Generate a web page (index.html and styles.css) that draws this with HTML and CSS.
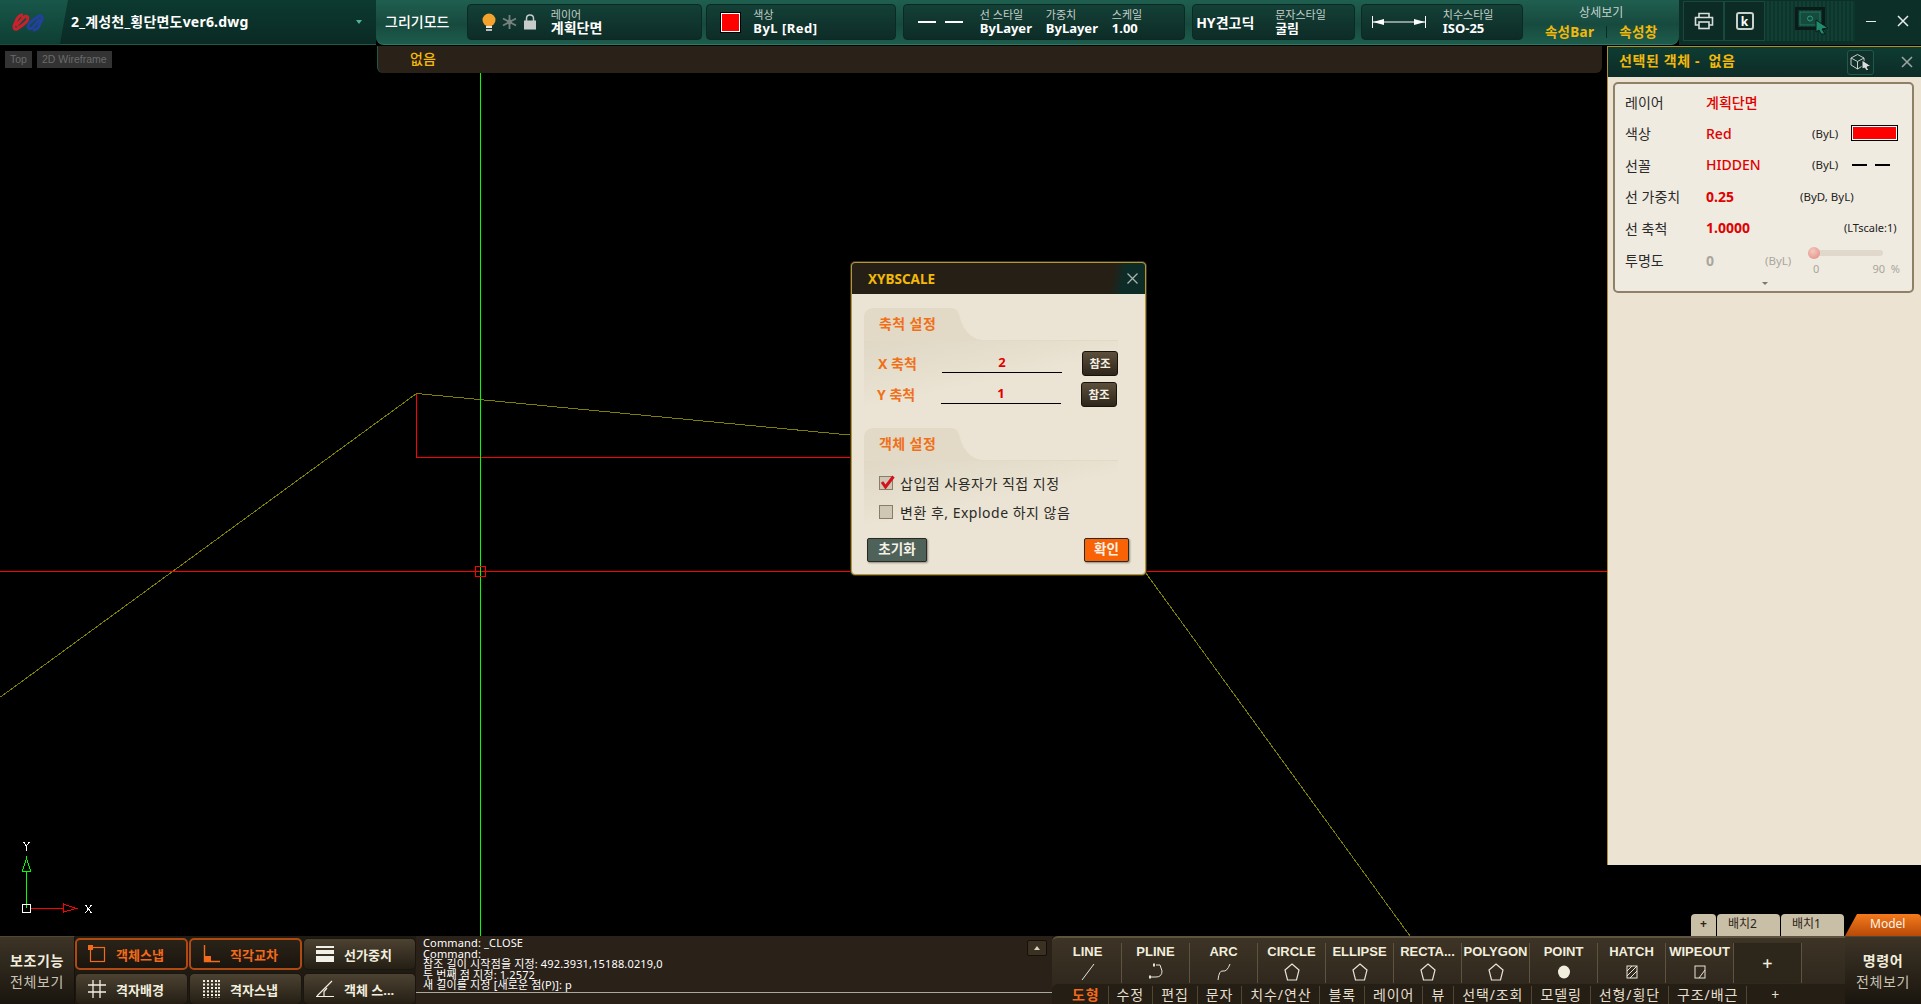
FILE: index.html
```html
<!DOCTYPE html>
<html lang="ko">
<head>
    <meta charset="UTF-8">
    <title>2_계성천_횡단면도ver6.dwg</title>
    <link rel="stylesheet" href="styles.css">
</head>
<body>
<div class="app">

    <header class="topbar">
        <div class="file-tab">
            <div class="logo">
                <svg width="32" height="19" viewBox="0 0 32 19" fill="none" stroke-width="3">
                    <path d="M4 13L11 5Q14 2 15.500 4Q17 7 12 11Q8 14 5 16Q1.500 17 2 13L5 6Q7 2 11 2" stroke="#c9222c"/>
                    <path d="M28 6L21 14Q18 17 16.500 15Q15 12 20 8Q24 5 27 3Q30.500 2 30 6L27 13Q25 17 21 17" stroke="#23419c"/>
                </svg>
            </div>
            <span class="file-name">2_계성천_횡단면도ver6.dwg</span>
            <span class="file-arrow"></span>
        </div>

        <div class="mode-bar">
            <div class="mode-name">그리기모드</div>

            <div class="group group-layer">
                <div class="layer-icons">
                    <svg width="14" height="19" viewBox="0 0 14 19">
                        <circle cx="7" cy="7" r="6.500" fill="#f2a32e"/>
                        <rect x="4" y="13" width="6" height="2" fill="#e8e8e8"/>
                        <rect x="4" y="16" width="6" height="2" fill="#bbb"/>
                    </svg>
                    <svg width="15" height="16" viewBox="0 0 15 16" stroke="#76827e" stroke-width="1.800">
                        <path d="M7.500 1V15M1 4.500L14 11.500M14 4.500L1 11.500"/>
                        <circle cx="7.500" cy="8" r="2.500" fill="#76827e" stroke="none"/>
                    </svg>
                    <svg width="14" height="16" viewBox="0 0 14 16">
                        <path d="M3.500 7V4.500C3.500 2.500 5 1 7 1S10.500 2.500 10.500 4.500V7" fill="none" stroke="#c7cccb" stroke-width="1.500"/>
                        <rect x="1" y="6.500" width="12" height="9" fill="#c7cccb"/>
                    </svg>
                </div>
                <div class="field">
                    <span class="field-label">레이어</span>
                    <span class="field-value field-value-big">계획단면</span>
                </div>
            </div>

            <div class="group group-color">
                <span class="color-chip"></span>
                <div class="field">
                    <span class="field-label">색상</span>
                    <span class="field-value field-value-wide">ByL [Red]</span>
                </div>
            </div>

            <div class="group group-line">
                <span class="dash-sample"><i></i><i></i></span>
                <div class="field field-style">
                    <span class="field-label">선 스타일</span>
                    <span class="field-value">ByLayer</span>
                </div>
                <div class="field field-style">
                    <span class="field-label">가중치</span>
                    <span class="field-value">ByLayer</span>
                </div>
                <div class="field">
                    <span class="field-label">스케일</span>
                    <span class="field-value">1.00</span>
                </div>
            </div>

            <div class="group group-text">
                <span class="font-name">HY견고딕</span>
                <div class="field">
                    <span class="field-label">문자스타일</span>
                    <span class="field-value">굴림</span>
                </div>
            </div>

            <div class="group group-dim">
                <svg class="dim-icon" width="54" height="16" viewBox="0 0 54 16" fill="#fff">
                    <rect x="0" y="2" width="1" height="12"/>
                    <rect x="53" y="2" width="1" height="12"/>
                    <rect x="1" y="7.500" width="52" height="1"/>
                    <path d="M1 8L12 5V11Z"/>
                    <path d="M53 8L42 5V11Z"/>
                </svg>
                <div class="field">
                    <span class="field-label">치수스타일</span>
                    <span class="field-value">ISO-25</span>
                </div>
            </div>

            <div class="detail">
                <div class="detail-title">상세보기</div>
                <div class="detail-links">
                    <span>속성Bar</span>
                    <i></i>
                    <span>속성창</span>
                </div>
            </div>
        </div>

        <div class="win-tools">
            <div class="tool-btn">
                <svg width="20" height="18" viewBox="0 0 20 18" fill="none" stroke="#d8dedb" stroke-width="1.600">
                    <path d="M5 5V1.500H15V5"/>
                    <path d="M5 13H1.500V5.500H18.500V13H15"/>
                    <rect x="5" y="10" width="10" height="6.500"/>
                </svg>
            </div>
            <div class="tool-btn">
                <span class="key-icon">k</span>
            </div>
            <div class="monitor-strip">
                <svg width="34" height="28" viewBox="0 0 34 28">
                    <rect x="1.500" y="1.500" width="27" height="20" fill="none" stroke="#0b1c18" stroke-width="3"/>
                    <rect x="5" y="5" width="20" height="13" fill="#154a3d" stroke="#1f7a63"/>
                    <circle cx="15" cy="11.500" r="2.500" fill="none" stroke="#2a9c7f"/>
                    <path d="M21 13L33 21L27 22L30 27L26 27L24 23L21 25Z" fill="#1f8a6d" stroke="#0b1c18"/>
                </svg>
            </div>
            <div class="win-btn"><span class="min-mark"></span></div>
            <div class="win-btn">
                <svg width="14" height="14" viewBox="0 0 14 14" stroke="#e8ecea" stroke-width="1.500"><path d="M2 2L12 12M12 2L2 12"/></svg>
            </div>
        </div>
    </header>

    <main class="viewport">
        <svg class="drawing" viewBox="0 46 1921 890" width="1921" height="890" shape-rendering="crispEdges">
            <path d="M0.500 697L416.500 393.500L860 436" stroke="#808000" fill="none"/>
            <path d="M1140 565L1410 936" stroke="#808000" fill="none"/>
            <path d="M416.500 393.500V457.500H860" stroke="#f00" fill="none"/>
            <path d="M0 571.500H1921" stroke="#f00"/>
            <path d="M480.500 73V936" stroke="#0f0"/>
            <rect x="475.500" y="566.500" width="10" height="10" fill="none" stroke="#f00"/>
            <path d="M26.500 871V908" stroke="#0f0"/>
            <path d="M26.500 858L22.500 871H30.500Z" fill="none" stroke="#0f0"/>
            <path d="M31 908.500H63" stroke="#f00"/>
            <path d="M63.500 904L76 908.500L63.500 912Z" fill="none" stroke="#f00"/>
            <rect x="22.500" y="904.500" width="8" height="8" fill="none" stroke="#fff"/>
            <path d="M23.500 842L26.500 846V851M29.500 842L26.500 846" fill="none" stroke="#fff"/>
            <path d="M85.500 905L91.500 913M91.500 905L85.500 913" fill="none" stroke="#fff"/>
        </svg>

        <div class="sub-row">
            <div class="view-labels">
                <span class="view-label">Top</span>
                <span class="view-label">2D Wireframe</span>
            </div>
            <div class="sub-bar">없음</div>
        </div>

        <aside class="prop-panel">
            <div class="prop-title">
                <span class="prop-title-text">선택된 객체 -  없음</span>
                <div class="cube-btn">
                    <svg width="22" height="18" viewBox="0 0 22 18" fill="none" stroke="#c7ceca">
                        <path d="M1 5L7.500 1.500L14 5V12L7.500 16L1 12ZM1 5L7.500 8.500L14 5M7.500 8.500V16"/>
                        <path d="M12 7L21 13L17 14L19 17.500L16.500 17.500L14.500 15L12 16Z" fill="#d8dedb" stroke="#10241f"/>
                    </svg>
                </div>
                <div class="prop-close">
                    <svg width="12" height="12" viewBox="0 0 12 12" stroke="#9aa5a1" stroke-width="1.600"><path d="M1 1L11 11M11 1L1 11"/></svg>
                </div>
            </div>
            <div class="prop-card">
                <div class="prop-row">
                    <span class="prop-name">레이어</span>
                    <span class="prop-val">계획단면</span>
                </div>
                <div class="prop-row">
                    <span class="prop-name">색상</span>
                    <span class="prop-val">Red</span>
                    <span class="prop-src">(ByL)</span>
                    <span class="prop-chip"></span>
                </div>
                <div class="prop-row">
                    <span class="prop-name">선꼴</span>
                    <span class="prop-val">HIDDEN</span>
                    <span class="prop-src">(ByL)</span>
                    <span class="prop-dash"><i></i><i></i></span>
                </div>
                <div class="prop-row">
                    <span class="prop-name">선 가중치</span>
                    <span class="prop-val prop-bold">0.25</span>
                    <span class="prop-src prop-src-wide">(ByD, ByL)</span>
                </div>
                <div class="prop-row">
                    <span class="prop-name">선 축척</span>
                    <span class="prop-val prop-bold">1.0000</span>
                    <span class="prop-src prop-src-end">(LTscale:1)</span>
                </div>
                <div class="prop-row prop-row-last">
                    <span class="prop-name">투명도</span>
                    <span class="prop-val prop-bold prop-off">0</span>
                    <span class="prop-src prop-off prop-src-alpha">(ByL)</span>
                    <div class="alpha">
                        <div class="alpha-track"><span class="alpha-knob"></span></div>
                        <div class="alpha-scale"><span>0</span><span>90 &nbsp;%</span></div>
                    </div>
                </div>
                <span class="more-arrow"></span>
            </div>
        </aside>

        <section class="dialog">
            <div class="dialog-title">
                <span>XYBSCALE</span>
                <div class="dialog-close">
                    <svg width="11" height="11" viewBox="0 0 11 11" stroke="#a9b3af" stroke-width="1.300"><path d="M0.500 0.500L10.500 10.500M10.500 0.500L0.500 10.500"/></svg>
                </div>
            </div>
            <div class="dialog-body">
                <div class="sec-tab">축척 설정</div>
                <div class="sec-body">
                    <div class="scale-row">
                        <span class="scale-name">X 축척</span>
                        <span class="scale-input">2</span>
                        <span class="ref-btn">참조</span>
                    </div>
                    <div class="scale-row scale-row-y">
                        <span class="scale-name">Y 축척</span>
                        <span class="scale-input">1</span>
                        <span class="ref-btn">참조</span>
                    </div>
                </div>
                <div class="sec-tab sec-tab-2">객체 설정</div>
                <div class="sec-body sec-body-2">
                    <label class="check-row">
                        <span class="check">
                            <svg width="15" height="14" viewBox="0 0 15 14"><path d="M2 7L5.500 12L13.500 1.500" fill="none" stroke="#d4111c" stroke-width="3"/></svg>
                        </span>
                        삽입점 사용자가 직접 지정
                    </label>
                    <label class="check-row">
                        <span class="check"></span>
                        변환 후, Explode 하지 않음
                    </label>
                </div>
                <div class="dialog-foot">
                    <span class="btn-reset">초기화</span>
                    <span class="btn-ok">확인</span>
                </div>
            </div>
        </section>

        <nav class="layout-tabs">
            <span class="layout-tab layout-add">+</span>
            <span class="layout-tab">배치2</span>
            <span class="layout-tab">배치1</span>
            <span class="layout-tab layout-model">Model</span>
        </nav>
    </main>

    <footer class="bottom">
        <div class="aux-btn">
            <strong>보조기능</strong>
            <span>전체보기</span>
        </div>
        <div class="snap-grid">
            <div class="snap snap-on">
                <svg width="18" height="18" viewBox="0 0 18 18"><rect x="2.500" y="2.500" width="14" height="14" fill="none" stroke="#f26a1b" stroke-width="1.200"/><rect x="0" y="0" width="5" height="5" fill="#f26a1b"/></svg>
                <span>객체스냅</span>
            </div>
            <div class="snap snap-on">
                <svg width="18" height="18" viewBox="0 0 18 18"><path d="M2.500 0V16.500H18" fill="none" stroke="#f26a1b" stroke-width="1.400"/><rect x="3" y="11" width="6" height="5" fill="#f26a1b"/></svg>
                <span>직각교차</span>
            </div>
            <div class="snap">
                <svg width="18" height="18" viewBox="0 0 18 18" fill="#f2efe6"><rect y="1" width="18" height="2"/><rect y="5" width="18" height="4"/><rect y="11" width="18" height="6"/></svg>
                <span>선가중치</span>
            </div>
            <div class="snap">
                <svg width="18" height="18" viewBox="0 0 18 18" stroke="#f2efe6" stroke-width="1.300"><path d="M5 0V18M12 0V18M0 5H18M0 12H18"/></svg>
                <span>격자배경</span>
            </div>
            <div class="snap">
                <svg width="18" height="18" viewBox="0 0 18 18" stroke="#f2efe6" stroke-width="2" stroke-dasharray="2 1.500"><path d="M2 0V18M6 0V18M10 0V18M14 0V18M17 0V18"/></svg>
                <span>격자스냅</span>
            </div>
            <div class="snap">
                <svg width="18" height="18" viewBox="0 0 18 18" fill="none" stroke="#f2efe6" stroke-width="1.200"><path d="M0 16.500H18M1 16L16 1"/><path d="M8 16.500V11.500L11 8" /></svg>
                <span>객체 스...</span>
            </div>
        </div>

        <div class="command">
            <div class="command-log">
                <div>Command: _CLOSE</div>
                <div>Command:</div>
                <div>참조 길이 시작점을 지정: 492.3931,15188.0219,0</div>
                <div>두 번째 점 지정: 1.2572</div>
                <div>새 길이를 지정 [새로운 점(P)]: p</div>
            </div>
            <div class="command-input"></div>
            <span class="command-up"></span>
        </div>

        <div class="ribbon">
            <div class="ribbon-tools">
                <div class="tool"><b>LINE</b><svg width="16" height="18" viewBox="0 0 16 18" fill="none" stroke="#e8e4d8"><path d="M2 17L14 1"/></svg></div>
                <div class="tool"><b>PLINE</b><svg width="16" height="18" viewBox="0 0 16 18" fill="none" stroke="#e8e4d8"><path d="M8 2H12L14 8Q14 14 8 14L2 14"/><path d="M6 0.500V3.500M2 12.500V15.500" stroke-width="2"/></svg></div>
                <div class="tool"><b>ARC</b><svg width="16" height="18" viewBox="0 0 16 18" fill="none" stroke="#e8e4d8"><path d="M2 17Q3 7 7 8T14 1"/></svg></div>
                <div class="tool"><b>CIRCLE</b><svg width="16" height="18" viewBox="0 0 16 18" fill="none" stroke="#e8e4d8" stroke-width="1.200"><path d="M8 1L15 7L12.500 17H3.500L1 7Z"/></svg></div>
                <div class="tool"><b>ELLIPSE</b><svg width="16" height="18" viewBox="0 0 16 18" fill="none" stroke="#e8e4d8" stroke-width="1.200"><path d="M8 1L15 7L12.500 17H3.500L1 7Z"/></svg></div>
                <div class="tool"><b>RECTA...</b><svg width="16" height="18" viewBox="0 0 16 18" fill="none" stroke="#e8e4d8" stroke-width="1.200"><path d="M8 1L15 7L12.500 17H3.500L1 7Z"/></svg></div>
                <div class="tool"><b>POLYGON</b><svg width="16" height="18" viewBox="0 0 16 18" fill="none" stroke="#e8e4d8" stroke-width="1.200"><path d="M8 1L15 7L12.500 17H3.500L1 7Z"/></svg></div>
                <div class="tool"><b>POINT</b><svg width="16" height="18" viewBox="0 0 16 18"><ellipse cx="8" cy="9" rx="6" ry="6.500" fill="#f2eedd"/></svg></div>
                <div class="tool"><b>HATCH</b><svg width="16" height="18" viewBox="0 0 16 18" fill="none" stroke="#e8e4d8"><rect x="3" y="3" width="10" height="12"/><path d="M3 8L8 3M3 13L13 3M6 15L13 8"/></svg></div>
                <div class="tool"><b>WIPEOUT</b><svg width="16" height="18" viewBox="0 0 16 18" fill="none" stroke="#e8e4d8"><rect x="3" y="3" width="10" height="12"/><path d="M7 15L13 7"/></svg></div>
                <div class="tool tool-add">+</div>
            </div>
            <div class="ribbon-tabs">
                <span class="rtab rtab-on">도형</span>
                <span class="rtab">수정</span>
                <span class="rtab">편집</span>
                <span class="rtab">문자</span>
                <span class="rtab">치수/연산</span>
                <span class="rtab">블록</span>
                <span class="rtab">레이어</span>
                <span class="rtab">뷰</span>
                <span class="rtab">선택/조회</span>
                <span class="rtab">모델링</span>
                <span class="rtab">선형/횡단</span>
                <span class="rtab">구조/배근</span>
                <span class="rtab rtab-add">+</span>
            </div>
        </div>

        <div class="all-cmd">
            <strong>명령어</strong>
            <span>전체보기</span>
        </div>
    </footer>
</div>
</body>
</html>
```

FILE: styles.css
```css
* {
    margin: 0;
    padding: 0;
    box-sizing: border-box;
}

body {
    font-family: "Noto Sans", "Noto Sans CJK KR", sans-serif;
    background: #000;
    overflow: hidden;
}

.app {
    width: 1921px;
    height: 1004px;
    display: flex;
    flex-direction: column;
    overflow: hidden;
}

/* top bar */
.topbar {
    height: 46px;
    display: flex;
    flex-shrink: 0;
    color: #fff;
}

.file-tab {
    width: 376px;
    height: 45px;
    display: flex;
    align-items: center;
    background: linear-gradient(#0c3a30, #0a2a24);
    border-bottom: 1px solid #1d5a4a;
}

.logo {
    width: 68px;
    height: 45px;
    display: flex;
    align-items: center;
    padding-left: 12px;
    background: linear-gradient(#18574a, #0e3e33);
    clip-path: polygon(0 0, 100% 0, 88% 100%, 0 100%);
}

.file-name {
    margin: -2px 0 0 3px;
    font-size: 14px;
    font-weight: 700;
    letter-spacing: 0.2px;
}

.file-arrow {
    margin-left: auto;
    margin-right: 14px;
    border-left: 3px solid transparent;
    border-right: 3px solid transparent;
    border-top: 4px solid #4fb598;
}

.mode-bar {
    width: 1303px;
    height: 45px;
    display: flex;
    align-items: center;
    gap: 4px;
    padding-left: 9px;
    background: linear-gradient(#1f5f4f, #174a3e 55%, #1d5c4c);
    border-bottom: 1px solid #2a7a64;
    border-radius: 0 0 8px 8px;
}

.mode-name {
    width: 78px;
    margin-top: -2px;
    font-size: 14px;
    font-weight: 500;
    white-space: nowrap;
}

.group {
    height: 36px;
    display: flex;
    align-items: center;
    background: linear-gradient(#134036, #0e2c27);
    border: 1px solid #0c2a24;
    border-radius: 4px;
}

.group-layer {
    width: 236px;
    padding-left: 14px;
}

.group-color {
    width: 190px;
    padding-left: 14px;
}

.group-line {
    width: 283px;
    margin-left: 3px;
    padding-left: 14px;
}

.group-text {
    width: 163px;
    margin-left: 3px;
    padding-left: 3px;
}

.group-dim {
    width: 163px;
    margin-left: 2px;
    padding-left: 10px;
}

.layer-icons {
    width: 69px;
    display: flex;
    align-items: center;
    gap: 6px;
}

.field {
    display: flex;
    flex-direction: column;
    white-space: nowrap;
}

.field-label {
    font-size: 11px;
    line-height: 12px;
    color: #c3cec8;
}

.field-value {
    font-size: 13px;
    line-height: 14px;
    font-weight: 700;
}

.field-value-big {
    font-size: 14px;
}

.field-value-wide {
    letter-spacing: 0.5px;
}

.field-style {
    width: 66px;
}

.color-chip {
    width: 19px;
    height: 19px;
    margin-right: 13px;
    background: #f00;
    border: 1px solid #fff;
    outline: 1px solid #000;
}

.dash-sample {
    width: 62px;
    display: flex;
    gap: 9px;
}

.dash-sample i {
    width: 18px;
    height: 2px;
    background: #fff;
}

.font-name {
    width: 79px;
    font-size: 14px;
    font-weight: 700;
    white-space: nowrap;
}

.dim-icon {
    margin-right: 17px;
}

.detail {
    width: 156px;
    margin-left: -4px;
    padding-top: 3px;
    text-align: center;
}

.detail-title {
    font-size: 12px;
    line-height: 16px;
    color: #c8d3cd;
}

.detail-links {
    display: flex;
    justify-content: center;
    align-items: center;
    gap: 12px;
    padding-top: 1px;
    font-size: 13.500px;
    line-height: 20px;
    font-weight: 700;
    color: #f2b90a;
    letter-spacing: 0.3px;
}

.detail-links i {
    width: 1px;
    height: 12px;
    background: #0c2a24;
}

.win-tools {
    flex: 1;
    height: 45px;
    display: flex;
    align-items: flex-start;
    padding: 1px 0 0 4px;
    background: #0c2f28;
}

.tool-btn {
    width: 41px;
    height: 40px;
    display: flex;
    align-items: center;
    justify-content: center;
    background: #0d2b25;
    border: 1px solid #17493d;
}

.key-icon {
    width: 18px;
    height: 18px;
    display: flex;
    align-items: center;
    justify-content: center;
    font-size: 12px;
    font-weight: 700;
    border: 2px solid #c9d1cd;
    border-radius: 3px;
}

.monitor-strip {
    width: 90px;
    height: 40px;
    display: flex;
    align-items: center;
    justify-content: center;
    padding-left: 4px;
    background: repeating-linear-gradient(90deg, #0e352c 0 2px, #123f34 2px 4px);
}

.win-btn {
    width: 32px;
    height: 40px;
    display: flex;
    align-items: center;
    justify-content: center;
}

.min-mark {
    width: 10px;
    height: 1px;
    background: #e8ecea;
}

/* drawing area */
.viewport {
    position: relative;
    flex: 1;
}

.drawing {
    position: absolute;
    top: 0;
    left: 0;
    display: block;
}

.sub-row {
    position: relative;
    display: grid;
    grid-template-columns: 377px 1225px;
}

.view-labels {
    display: flex;
    gap: 5px;
    padding: 5px 0 0 5px;
}

.view-label {
    height: 17px;
    padding: 0 5px;
    font-family: "Liberation Sans", sans-serif;
    font-size: 10.500px;
    line-height: 17px;
    color: #6a6a6a;
    background: #333;
}

.sub-bar {
    height: 27px;
    padding-left: 32px;
    font-size: 14px;
    font-weight: 500;
    line-height: 25px;
    color: #f2b90a;
    background: #2a2118;
    border-left: 1px solid #1d5a4a;
    border-radius: 0 0 6px 6px;
}

/* properties panel */
.prop-panel {
    position: absolute;
    top: 0;
    right: 0;
    width: 314px;
    height: 819px;
    background: #ece3d3;
    border-left: 1px solid #b08f2a;
}

.prop-title {
    height: 31px;
    display: flex;
    align-items: center;
    padding-left: 11px;
    font-size: 14px;
    font-weight: 700;
    color: #f2b90a;
    white-space: pre;
    background: linear-gradient(#0e3c32, #0d2c27);
    border-top: 1px solid #b08f2a;
}

.prop-title-text {
    margin-top: -4px;
    letter-spacing: 0.6px;
}

.cube-btn {
    width: 27px;
    height: 25px;
    margin-left: auto;
    display: flex;
    align-items: center;
    justify-content: center;
    background: #10302a;
    border: 1px solid #1d5a4a;
    border-radius: 3px;
}

.prop-close {
    width: 47px;
    display: flex;
    justify-content: flex-end;
    padding-right: 8px;
}

.prop-card {
    position: relative;
    height: 211px;
    margin: 5px 7px 0 5px;
    padding: 2px 0 0 10px;
    background: #f0ebe0;
    border: 2px solid #8f8168;
    border-radius: 5px;
}

.prop-row {
    height: 31.500px;
    display: flex;
    align-items: center;
    font-size: 13px;
}

.prop-row-last {
    margin-top: 1px;
}

.prop-name {
    width: 81px;
    font-size: 14px;
    color: #2a2a2a;
}

.prop-val {
    width: 106px;
    font-size: 14px;
    font-weight: 500;
    color: #e00000;
}

.prop-bold {
    font-weight: 700;
}

.prop-off {
    color: #a9a69e;
}

.prop-src {
    font-size: 11.500px;
    color: #222;
}

.prop-src-wide {
    margin-left: -12px;
}

.prop-src-end {
    margin-left: 32px;
    font-size: 11px;
}

.prop-src.prop-off {
    color: #a9a69e;
}

.prop-src-alpha {
    width: 43px;
    margin-left: -47px;
}

.prop-chip {
    width: 45px;
    height: 14px;
    margin-left: 14px;
    background: #f00;
    border: 1px solid #fff;
    outline: 1px solid #000;
}

.prop-dash {
    width: 45px;
    display: flex;
    gap: 8px;
    margin-left: 14px;
}

.prop-dash i {
    width: 15px;
    height: 2px;
    background: #000;
}

.alpha {
    width: 92px;
    padding-top: 6px;
}

.alpha-track {
    position: relative;
    width: 75px;
    height: 6px;
    background: #e0d8ca;
    border-radius: 3px;
}

.alpha-knob {
    position: absolute;
    top: -3px;
    left: 0;
    width: 12px;
    height: 12px;
    background: radial-gradient(circle at 40% 35%, #f6c9c0, #e08a80);
    border-radius: 50%;
}

.alpha-scale {
    display: flex;
    justify-content: space-between;
    padding: 5px 0 0 5px;
    font-size: 11px;
    color: #a9a69e;
}

.more-arrow {
    position: absolute;
    left: 147px;
    bottom: 6px;
    border-left: 3px solid transparent;
    border-right: 3px solid transparent;
    border-top: 3px solid #777;
}

/* dialog */
.dialog {
    position: absolute;
    top: 216px;
    left: 851px;
    width: 295px;
    height: 313px;
    background: #ebe3d3;
    border: 1px solid #b7962f;
    border-radius: 4px;
    box-shadow: 0 0 0 1px #3a3320;
    overflow: hidden;
}

.dialog-title {
    height: 31px;
    display: flex;
    align-items: center;
    justify-content: space-between;
    padding: 0 7px 0 16px;
    font-size: 13.500px;
    font-weight: 700;
    color: #f2b90a;
    background: linear-gradient(100deg, #261f15 88%, #0d2c27 92%);
}

.dialog-body {
    padding: 14px 0 0 12px;
}

.sec-tab {
    width: 118px;
    height: 32px;
    padding: 5px 0 0 15px;
    font-size: 14px;
    font-weight: 700;
    color: #f0701a;
    background: #e2dac7;
    letter-spacing: 0.4px;
    clip-path: path("M0 10 Q0 0 10 0 H88 Q94 0 96 10 Q102 30 118 32 H0 Z");
}

.sec-tab-2 {
    margin-top: 18px;
}

.sec-body {
    position: relative;
    width: 254px;
    height: 70px;
    padding-top: 8px;
    border-top: 1px solid #e2dac7;
    background: linear-gradient(168deg, #e0d8c5, #ebe3d3 55%);
}

.sec-body-2 {
    height: 68px;
    padding: 7px 0 0 15px;
}

.scale-row {
    height: 28px;
    display: flex;
    align-items: center;
}

.scale-row-y {
    margin-top: 3px;
    margin-left: -1px;
}

.scale-name {
    width: 78px;
    padding-left: 14px;
    font-size: 14px;
    font-weight: 700;
    color: #f0701a;
    white-space: nowrap;
}

.scale-input {
    width: 120px;
    height: 20px;
    font-size: 13px;
    font-weight: 700;
    line-height: 19px;
    color: #e00000;
    text-align: center;
    border-bottom: 1px solid #000;
}

.ref-btn {
    width: 36px;
    height: 25px;
    margin-left: 20px;
    flex-shrink: 0;
    font-size: 11.500px;
    font-weight: 700;
    line-height: 23px;
    text-align: center;
    color: #f4efe2;
    background: linear-gradient(#5c4f3c, #2e261b);
    border: 1px solid #17120b;
    border-radius: 3px;
}

.check-row {
    height: 29.500px;
    display: flex;
    align-items: center;
    gap: 7px;
    font-size: 14px;
    letter-spacing: 0.5px;
    white-space: nowrap;
    color: #2a2a26;
}

.check {
    width: 14px;
    height: 14px;
    flex-shrink: 0;
    background: #cfc6b3;
    border: 1px solid #8a7d68;
}

.check svg {
    display: block;
    margin: -2px 0 0 0;
}

.dialog-foot {
    display: flex;
    justify-content: space-between;
    margin-top: 10px;
    padding: 0 16px 0 3px;
}

.btn-reset,
.btn-ok {
    height: 24px;
    font-size: 13.500px;
    font-weight: 700;
    line-height: 20px;
    text-align: center;
    color: #f6f2e8;
    border: 1px solid #2a2a22;
    border-radius: 2px;
    box-shadow: 1px 1px 2px rgba(0, 0, 0, 0.4);
}

.btn-reset {
    width: 60px;
    background: #4f6259;
}

.btn-ok {
    width: 45px;
    background: #f96205;
}

.layout-tabs {
    position: absolute;
    right: 0;
    bottom: 0;
    display: flex;
    gap: 1px;
    height: 22px;
}

.layout-tab {
    width: 63px;
    padding-left: 11px;
    font-size: 12px;
    line-height: 20px;
    color: #2a2418;
    background: #c9bea6;
    border-radius: 4px 4px 0 0;
}

.layout-add {
    width: 25px;
    padding-left: 0;
    text-align: center;
    font-weight: 700;
}

.layout-model {
    width: 76px;
    padding-left: 25px;
    color: #fff4e6;
    background: linear-gradient(#f47a1c, #b84a08);
    clip-path: polygon(12px 0, 100% 0, 100% 100%, 0 100%);
}

/* bottom bar */
.bottom {
    height: 68px;
    flex-shrink: 0;
    display: flex;
    color: #f2eedd;
    background: #1f1a12;
}

.aux-btn,
.all-cmd {
    display: flex;
    flex-direction: column;
    align-items: center;
    justify-content: center;
    flex-shrink: 0;
    font-size: 14px;
    line-height: 21px;
    letter-spacing: 0.6px;
    background: linear-gradient(#3d3426, #1a150e);
}

.aux-btn {
    width: 75px;
    border-top: 1px solid #4f4633;
    border-right: 1px solid #14100a;
}

.all-cmd {
    width: 76px;
    border-top: 1px solid #4f4633;
}

.aux-btn span,
.all-cmd span {
    color: #c9c4b4;
}

.snap-grid {
    width: 341px;
    flex-shrink: 0;
    display: grid;
    grid-template-columns: 113px 113px 113px;
    grid-auto-rows: 32px;
    gap: 3px 1px;
    padding-top: 2px;
}

.snap {
    display: flex;
    align-items: center;
    gap: 10px;
    padding-left: 12px;
    font-size: 13px;
    font-weight: 700;
    white-space: nowrap;
    background: linear-gradient(#4c4232, #241e14);
    border: 1px solid #1a150e;
    border-radius: 5px;
}

.snap-on {
    padding-left: 11px;
    color: #f26a1b;
    background: linear-gradient(#2a2318, #1a150e);
    border: 2px solid #b04a12;
}

.command {
    position: relative;
    flex: 1;
    padding: 2px 0 0 7px;
    background: #2a2118;
}

.command-log {
    height: 54px;
    font-size: 11px;
    line-height: 10.500px;
    letter-spacing: 0.15px;
    color: #fff;
    white-space: nowrap;
}

.command-input {
    height: 1px;
    margin-left: -7px;
    background: #aaa9a0;
}

.command-up {
    position: absolute;
    top: 4px;
    right: 5px;
    width: 20px;
    height: 16px;
    background: #3b3123;
    border: 1px solid #151009;
    border-radius: 2px;
}

.command-up::after {
    content: "";
    position: absolute;
    top: 5px;
    left: 6px;
    border-left: 3px solid transparent;
    border-right: 3px solid transparent;
    border-bottom: 4px solid #d8d3c2;
}

.ribbon {
    width: 793px;
    flex-shrink: 0;
    background: linear-gradient(#3d3426, #2a2319);
    border-top: 2px solid #5d5340;
    border-radius: 6px 0 0 0;
}

.ribbon-tools {
    height: 46px;
    display: flex;
    padding-top: 5px;
    padding-left: 2px;
}

.tool {
    width: 68px;
    height: 40px;
    flex-shrink: 0;
    display: flex;
    flex-direction: column;
    align-items: center;
    gap: 2px;
    border-right: 1px solid #5d5340;
}

.tool b {
    font-family: "Liberation Sans", sans-serif;
    font-size: 13px;
    line-height: 18px;
    white-space: nowrap;
}

.tool svg {
    display: block;
}

.tool-add {
    justify-content: center;
    font-size: 18px;
    font-weight: 500;
    background: #2d261b;
}

.ribbon-tabs {
    display: flex;
    align-items: center;
    height: 20px;
    padding: 1px 0 0 12px;
    background: #241e14;
    border-radius: 6px 0 0 0;
}

.rtab {
    padding: 0 8px;
    font-size: 14px;
    letter-spacing: 0.9px;
    line-height: 18px;
    color: #e4dfcf;
    white-space: nowrap;
    border-right: 1px solid #4f4633;
}

.rtab-on {
    padding: 0 8px;
    font-weight: 700;
    color: #f26a1b;
}

.rtab-add {
    margin-left: 16px;
    font-size: 14px;
    line-height: 16px;
    border-right: 0;
}
```
